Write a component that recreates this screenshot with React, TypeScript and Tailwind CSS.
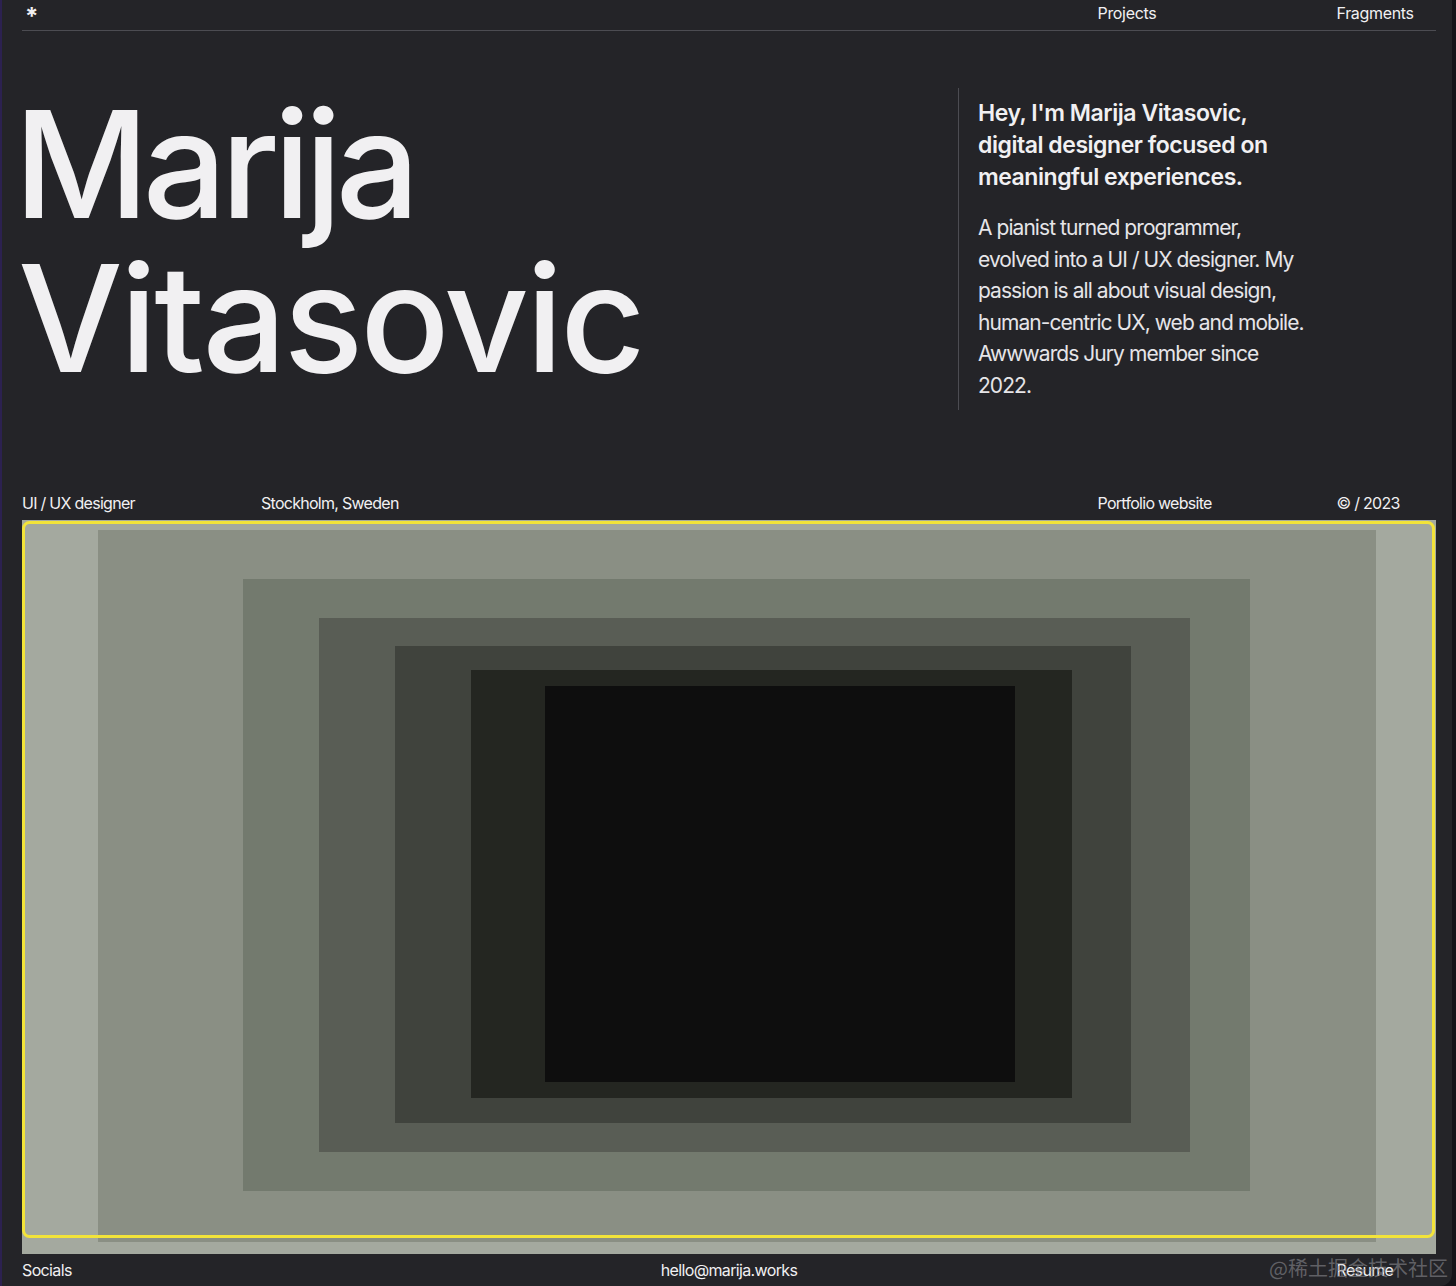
import React from "react";

const font = { fontFamily: "Inter, 'Noto Sans', sans-serif" };

function Art() {
  return (
    <svg width="1414" height="734" viewBox="0 0 1414 734" className="block">
      <rect x="0" y="0" width="1414" height="734" fill="#a4a99f" />
      <rect x="76" y="10" width="1278" height="712" fill="#8a8f84" />
      <rect x="221" y="59" width="1007" height="612" fill="#737a6e" />
      <rect x="297" y="98" width="871" height="534" fill="#595d55" />
      <rect x="373" y="126" width="736" height="477" fill="#40433d" />
      <rect x="449" y="150" width="601" height="428" fill="#242621" />
      <rect x="523" y="166" width="470" height="396" fill="#0e0e0e" />
      <rect x="1.5" y="2.5" width="1410" height="714" rx="6" fill="none" stroke="#f2e33a" strokeWidth="3" />
    </svg>
  );
}

export default function App() {
  return (
    <div className="w-[1456px] h-[1286px] bg-[#151419] overflow-hidden" style={font}>
      <div className="relative w-[1452px] h-[1286px] bg-[#242428] border-l-2 border-[#2c2150] rounded-br-[12px] text-[#f1f0f2]">
        <div className="pl-[20px] w-[1434px]">
          {/* top nav */}
          <div className="grid grid-cols-[repeat(12,119.5px)] h-[31px] pt-[2px] border-b border-[#4c4c52] w-[1414px] text-[16px] leading-[22px] tracking-[-0.02em]">
            <div className="col-span-9 pl-[3px] pt-[4px] text-[24px] font-bold leading-[22px]">*</div>
            <div className="col-span-2">Projects</div>
            <div>Fragments</div>
          </div>

          {/* hero */}
          <div className="grid grid-cols-[repeat(12,119.5px)] mt-[57px] h-[404px]">
            <h1 className="col-span-8 text-[148px] leading-[154px] font-medium">
              <span className="block -ml-[8px] tracking-[-0.042em]">Marija</span>
              <span className="block -ml-[4px] tracking-[-0.02em]">Vitasovic</span>
            </h1>
            <div className="col-span-4 -ml-[20px] flex">
              <div className="w-px h-[322px] bg-[#4c4c52]" />
              <div className="pl-[19px] pt-[9px]">
                <p className="text-[23px] leading-[32px] font-semibold tracking-[-0.02em]">
                  Hey, I'm Marija Vitasovic,
                  <br />
                  digital designer focused on
                  <br />
                  meaningful experiences.
                </p>
                <p className="mt-[19px] text-[21px] leading-[31.5px] tracking-[-0.045em] text-[#e6e5e8]">
                  A pianist turned programmer,
                  <br />
                  evolved into a UI / UX designer. My
                  <br />
                  passion is all about visual design,
                  <br />
                  human-centric UX, web and mobile.
                  <br />
                  Awwwards Jury member since
                  <br />
                  2022.
                </p>
              </div>
            </div>
          </div>

          {/* labels */}
          <div className="grid grid-cols-[repeat(12,119.5px)] h-[28px] text-[16px] leading-[22px] tracking-[-0.045em]">
            <div className="col-span-2">UI / UX designer</div>
            <div className="col-span-7">Stockholm, Sweden</div>
            <div className="col-span-2">Portfolio website</div>
            <div>© / 2023</div>
          </div>

          {/* image */}
          <Art />

          {/* footer */}
          <div className="relative grid grid-cols-[repeat(12,119.5px)] pt-[5px] text-[16px] leading-[22px] tracking-[-0.04em] w-[1414px]">
            <div className="col-span-11">Socials</div>
            <div>Resume</div>
            <div className="absolute left-0 right-0 top-[5px] text-center pointer-events-none">hello@marija.works</div>
          </div>
        </div>
        <div
          className="absolute right-[4px] bottom-[6px] text-[20px] leading-[24px] text-[#8a8a8f]/60"
          style={{ fontFamily: "'Noto Sans CJK SC', sans-serif" }}
        >
          @稀土掘金技术社区
        </div>
      </div>
    </div>
  );
}
